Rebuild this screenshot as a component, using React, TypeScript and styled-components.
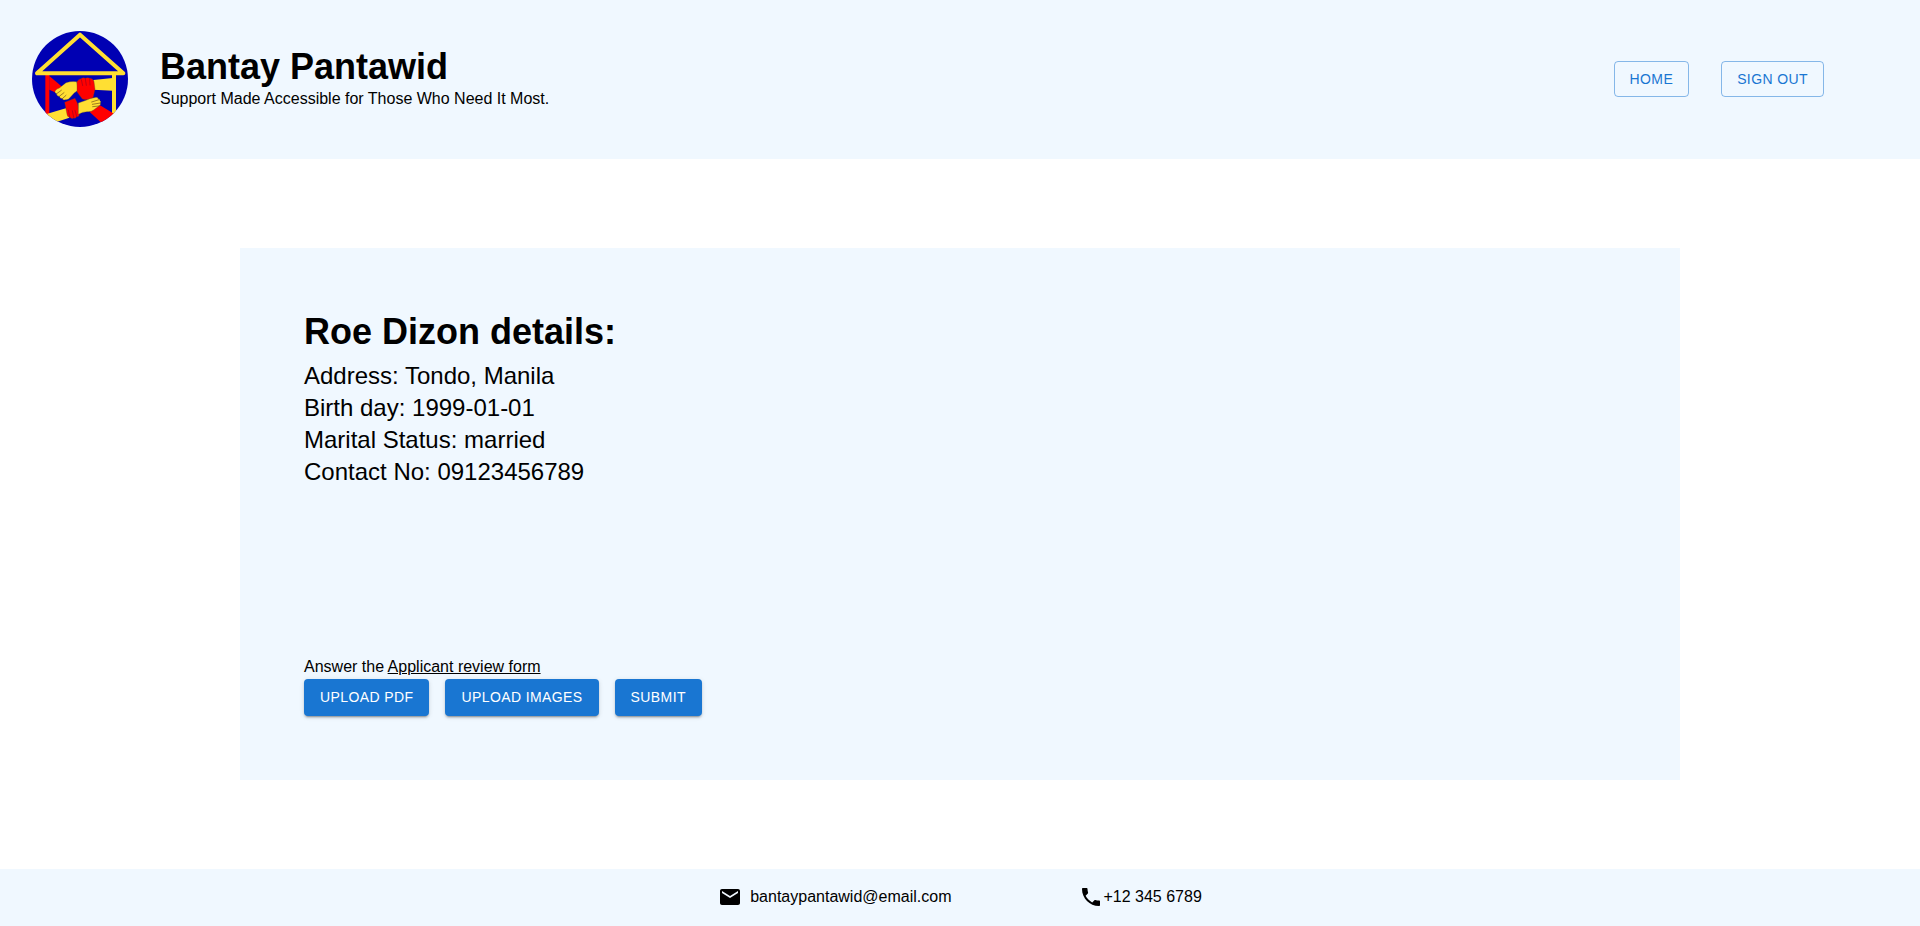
import React from "react";
import styled, { createGlobalStyle, css } from "styled-components";
import { MdEmail, MdLocalPhone } from "react-icons/md";

const GlobalStyle = createGlobalStyle`
  *, *::before, *::after { box-sizing: border-box; }
  body {
    margin: 0;
    background: #fff;
    color: #000;
    font-family: "Liberation Sans", Arial, sans-serif;
    font-size: 16px;
    line-height: 24px;
  }
  h1, h2, p, ul { margin: 0; padding: 0; }
`;

const Page = styled.div`
  display: flex;
  flex-direction: column;
  min-height: 100vh;
`;

const Header = styled.header`
  display: flex;
  align-items: center;
  justify-content: space-between;
  padding: 31px 96px 32px 32px;
  background: aliceblue;
`;

const Brand = styled.div`
  display: flex;
  align-items: center;
  gap: 32px;
`;

const Title = styled.h1`
  font-size: 36px;
  line-height: 40px;
  font-weight: 700;
`;

const Nav = styled.nav`
  display: flex;
  gap: 32px;
`;

const Button = styled.button<{ $outlined?: boolean }>`
  padding: 6px 16px;
  border: 0;
  border-radius: 4px;
  background: #1976d2;
  color: #fff;
  font: 500 14px / 25px "Liberation Sans", Arial, sans-serif;
  letter-spacing: 0.02857em;
  text-transform: uppercase;
  cursor: pointer;
  box-shadow: 0 3px 1px -2px rgba(0, 0, 0, 0.2), 0 2px 2px 0 rgba(0, 0, 0, 0.14),
    0 1px 5px 0 rgba(0, 0, 0, 0.12);
  ${({ $outlined }) =>
    $outlined &&
    css`
      padding: 5px 15px;
      border: 1px solid rgba(25, 118, 210, 0.5);
      background: transparent;
      color: #1976d2;
      line-height: 24px;
      box-shadow: none;
    `}
`;

const Main = styled.main`
  flex: 1;
  display: flex;
  align-items: center;
  justify-content: center;
  padding: 32px 0;
`;

const Card = styled.section`
  width: 75%;
  padding: 64px;
  background: aliceblue;
`;

const Details = styled.ul`
  margin-top: 8px;
  list-style: none;
  font-size: 24px;
  line-height: 32px;
`;

const Review = styled.div`
  margin-top: 167px;
`;

const FormLink = styled.a`
  color: inherit;
  text-decoration: underline;
`;

const Actions = styled.div`
  display: flex;
  gap: 16px;
`;

const Footer = styled.footer`
  display: flex;
  align-items: center;
  justify-content: center;
  gap: 128px;
  padding: 16px 16px 17px;
  background: aliceblue;
`;

const Contact = styled.div<{ $gap?: number }>`
  display: flex;
  align-items: center;
  gap: ${({ $gap = 0 }) => $gap}px;
`;

const Logo = () => (
  <svg width="96" height="96" viewBox="24 27 288 288" role="img" aria-label="Bantay Pantawid logo">
    <defs>
      <clipPath id="disc">
        <circle cx="168" cy="171" r="144" />
      </clipPath>
    </defs>
    <g clipPath="url(#disc)">
      <rect x="24" y="27" width="288" height="288" fill="#0000b3" />
      <path d="M264 158h12v140h-12z" fill="#ffdf33" />
      <path d="M64 158h12v140h-12z" fill="#f00" />
      <path d="M168 38L39 154h259z" fill="none" stroke="#ffdf33" strokeWidth="12" strokeLinejoin="round" />
      <path d="M76 162l39 33-19 17-20-9z" fill="#f00" />
      <path d="M208 174l58-6v38l-58-3z" fill="#ffdf33" />
      <path d="M60 278l68-20 8 29-50 17z" fill="#ffdf33" />
      <path d="M197 270l31-20 42 25-33 32z" fill="#f00" />
      <g stroke="#5a4a20" strokeWidth="1" strokeLinejoin="round">
        <path d="M122 241l31-12 8 16 5 33q-2 8-9 6-1 6-8 4-6 4-11-2-8 0-9-9z" fill="#f00" />
        <path d="M93 207q5-7 13-9l20-16q14-5 32-3l5 25q-14 8-24 22-6 9-15 7-6 3-9-3-8 0-9-7-9-1-8-8-7-2-5-8z" fill="#ffdf33" />
        <path d="M159 179q4-8 12-9 7-5 13-1 7-4 13 0 9 0 13 10l3 23-6 25q-14 10-32 4-10-13-16-22z" fill="#f00" />
        <path d="M163 243l23-8q11-6 24-8 10-3 13 3 6 1 5 6 5 3 1 7 3 5-4 9l-16 12q-8 7-20 5-13 0-26 8z" fill="#ffdf33" />
      </g>
      <g fill="none" stroke="#6b4a18" strokeWidth="2" strokeLinecap="round">
        <path d="M98 215l14-10M106 223l14-11M115 230l11-10M203 240l22-7M205 247l24-4M206 254l18-2" />
        <path d="M172 173l4 18M184 170l3 20M197 171l1 18M137 284l-4-20M149 286l-4-20M158 283l-5-18" stroke="#9c0020" />
      </g>
    </g>
  </svg>
);

const details = [
  "Address: Tondo, Manila",
  "Birth day: 1999-01-01",
  "Marital Status: married",
  "Contact No: 09123456789",
];

export default function App() {
  return (
    <Page>
      <GlobalStyle />
      <Header>
        <Brand>
          <Logo />
          <div>
            <Title>Bantay Pantawid</Title>
            <p>Support Made Accessible for Those Who Need It Most.</p>
          </div>
        </Brand>
        <Nav>
          <Button type="button" $outlined>Home</Button>
          <Button type="button" $outlined>Sign out</Button>
        </Nav>
      </Header>
      <Main>
        <Card>
          <Title as="h2">Roe Dizon details:</Title>
          <Details>
            {details.map((line) => (
              <li key={line}>{line}</li>
            ))}
          </Details>
          <Review>
            <p>
              Answer the <FormLink href="#review">Applicant review form</FormLink>
            </p>
            <Actions>
              <Button type="button">Upload PDF</Button>
              <Button type="button">Upload images</Button>
              <Button type="button">Submit</Button>
            </Actions>
          </Review>
        </Card>
      </Main>
      <Footer>
        <Contact $gap={8}>
          <MdEmail size={24} aria-hidden />
          <span>bantaypantawid@email.com</span>
        </Contact>
        <Contact>
          <MdLocalPhone size={24} aria-hidden />
          <span>+12 345 6789</span>
        </Contact>
      </Footer>
    </Page>
  );
}
